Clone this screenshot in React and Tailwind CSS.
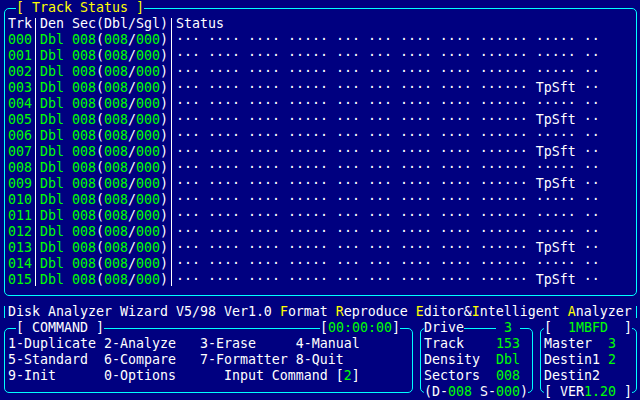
import React from 'react';

const DOTS = '··· ···· ···· ····· ··· ··· ···· ···· ······ ····· ··';
const TPSFT = '··· ···· ···· ····· ··· ··· ···· ···· ······ TpSft ··';
const TP_ROWS = [3, 5, 7, 9, 13, 15];

const tracks = Array.from({ length: 16 }, (_, i) => ({
  num: String(i).padStart(3, '0'),
  tp: TP_ROWS.includes(i),
}));

const Sep = () => (
  <div className="w-2 py-[2px]">
    <div className="ml-[3px] w-px h-full bg-white" />
  </div>
);

const Bar = () => (
  <div className="w-2 h-4 flex items-center">
    <div className="ml-[4px] w-px h-[12px] bg-[#00ffff]" />
  </div>
);

const TrackStatus = () => (
  <div className="relative ml-[4px] mt-[8px] w-[633px] h-[288px] border border-[#00ffff] rounded-[5px] pt-[7px] pl-[3px]">
    <div className="absolute -top-[9px] left-[11px] bg-[#000080] text-[#ffff00]">[ Track Status ]</div>
    <div className="flex">
      <div className="w-[24px]">
        <div>Trk</div>
        {tracks.map((t) => (
          <div key={t.num} className="text-[#00ff00]">{t.num}</div>
        ))}
      </div>
      <Sep />
      <div className="w-[128px]">
        <div>Den Sec(Dbl/Sgl)</div>
        {tracks.map((t) => (
          <div key={t.num}>
            <span className="text-[#00ff00]">Dbl 008</span>(<span className="text-[#00ff00]">008</span>/
            <span className="text-[#00ff00]">000</span>)
          </div>
        ))}
      </div>
      <Sep />
      <div className="flex-1">
        <div>Status</div>
        {tracks.map((t) => (
          <div key={t.num}>{t.tp ? TPSFT : DOTS}</div>
        ))}
      </div>
    </div>
  </div>
);

const Box = ({ width, children }) => (
  <div className={`relative ${width} h-[65px] border border-[#00ffff] rounded-[5px] pt-[7px] pl-[3px]`}>
    {children}
  </div>
);

const Label = ({ className = '', children }) => (
  <div className={`absolute bg-[#000080] ${className}`}>{children}</div>
);

export default function App() {
  return (
    <div className="w-[640px] h-[400px] overflow-hidden bg-[#000080] text-white font-['DejaVu_Sans_Mono',monospace] text-[13.29px] leading-[16px] whitespace-pre">
      <TrackStatus />

      <div className="flex mt-[8px] h-4">
        <Bar />
        <div className="w-[624px]">
          Disk Analyzer Wizard V5/98 Ver1.0 <span className="text-[#ffff00]">F</span>ormat{' '}
          <span className="text-[#ffff00]">R</span>eproduce <span className="text-[#ffff00]">E</span>ditor&amp;
          <span className="text-[#ffff00]">I</span>ntelligent <span className="text-[#ffff00]">A</span>nalyzer
        </div>
        <Bar />
      </div>

      <div className="flex gap-[7px] pl-[4px] mt-[8px]">
        <Box width="w-[409px]">
          <Label className="-top-[9px] left-[11px]">[ COMMAND ]</Label>
          <Label className="-top-[9px] right-[12px]">
            [<span className="text-[#00ff00]">00:00:00</span>]
          </Label>
          <div>1-Duplicate 2-Analyze   3-Erase     4-Manual</div>
          <div>5-Standard  6-Compare   7-Formatter 8-Quit</div>
          <div>
            9-Init      0-Options      Input Command [<span className="text-[#00ff00]">2</span>]
          </div>
        </Box>

        <Box width="w-[113px]">
          <Label className="-top-[9px] left-[3px]">Drive</Label>
          <Label className="-top-[9px] left-[75px] text-[#00ff00]"> 3 </Label>
          {[
            ['Track', '153'],
            ['Density', 'Dbl'],
            ['Sectors', '008'],
          ].map(([k, v]) => (
            <div key={k} className="flex">
              <div className="w-[72px]">{k}</div>
              <div className="text-[#00ff00]">{v}</div>
            </div>
          ))}
          <Label className="-bottom-[8px] left-[3px]">
            (D-<span className="text-[#00ff00]">008</span> S-<span className="text-[#00ff00]">000</span>)
          </Label>
        </Box>

        <Box width="w-[97px]">
          <Label className="-top-[9px] left-[3px]">
            [  <span className="text-[#00ff00]">1MBFD</span>  ]
          </Label>
          {[
            ['Master', '3'],
            ['Destin1', '2'],
            ['Destin2', ''],
          ].map(([k, v]) => (
            <div key={k} className="flex">
              <div className="w-[64px]">{k}</div>
              <div className="text-[#00ff00]">{v}</div>
            </div>
          ))}
          <Label className="-bottom-[8px] left-[3px]">
            [ VER<span className="text-[#00ff00]">1.20</span> ]
          </Label>
        </Box>
      </div>
    </div>
  );
}
